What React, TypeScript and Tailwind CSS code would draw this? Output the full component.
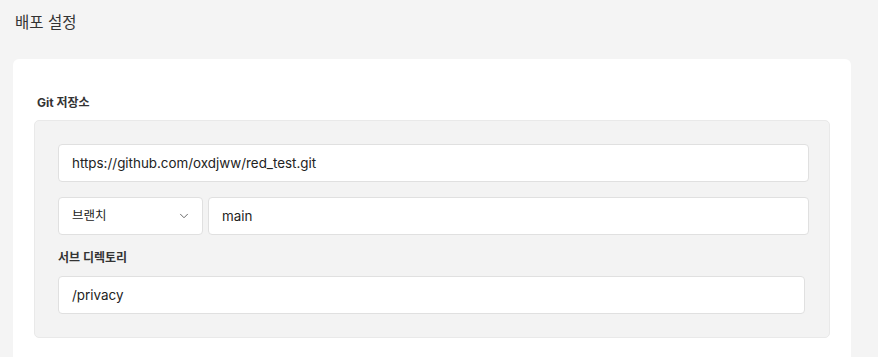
import { ChevronDown } from "lucide-react";

const font = {
  fontFamily: '"Inter", "Noto Sans CJK KR", sans-serif',
};

export default function App() {
  return (
    <div className="min-h-screen w-full bg-[#f4f4f4] px-[13px] pt-[13px] text-[#222]" style={font}>
      {/* Page title */}
      <h1 className="pl-[2px] text-[15.5px] leading-[20px] text-[#333]">배포 설정</h1>

      {/* Card */}
      <div className="mt-[26px] w-[838px] rounded-[6px] bg-white px-[21px] pt-[36px] pb-[40px]">
        <div className="pl-[3px] text-[12px] font-bold leading-[16px] text-[#333]">Git 저장소</div>

        <div className="mt-[9px] flex flex-col rounded-[5px] border border-[#e9e9e9] bg-[#f3f3f3] py-[23px] pl-[23px] pr-[24px]">
          <div className="-mr-[4px] flex h-[38px] items-center rounded-[4px] border border-[#e0e0e0] bg-white px-[13px] text-[13.4px]">
            https://github.com/oxdjww/red_test.git
          </div>

          <div className="-mr-[4px] mt-[15px] flex gap-[5px]">
            <div className="flex h-[38px] w-[145px] items-center justify-between rounded-[4px] border border-[#e0e0e0] bg-white pl-[13px] pr-[11px] text-[12.5px]">
              <span>브랜치</span>
              <ChevronDown className="h-[14px] w-[14px] text-[#555]" strokeWidth={1.5} />
            </div>
            <div className="flex h-[38px] flex-1 items-center rounded-[4px] border border-[#e0e0e0] bg-white px-[13px] text-[13.4px]">
              main
            </div>
          </div>

          <div className="mt-[15px] text-[12px] font-bold leading-[16px] text-[#333]">서브 디렉토리</div>

          <div className="mt-[10px] flex h-[38px] items-center rounded-[4px] border border-[#e0e0e0] bg-white px-[13px] text-[13.4px]">
            /privacy
          </div>
        </div>
      </div>
    </div>
  );
}
